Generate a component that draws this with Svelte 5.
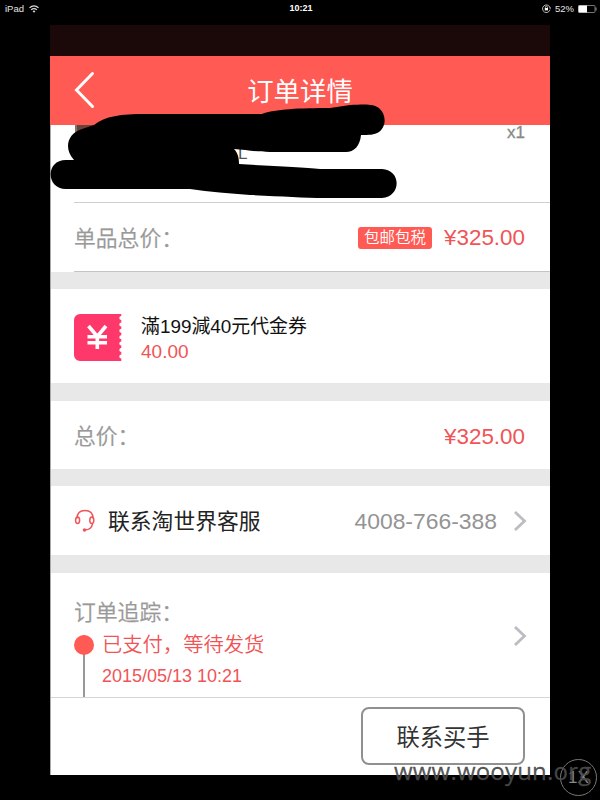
<script>
  const title = '订单详情';
</script>

{#snippet chevron()}
  <svg class="chevron" width="14" height="20" viewBox="0 0 14 20"><path d="M2 1 11.5 10 2 19" fill="none" stroke="#bcbcc2" stroke-width="2.8" /></svg>
{/snippet}

<div class="screen">
  <div class="tablet-bar">
    <div class="carrier">
      <span>iPad</span>
      <svg width="10" height="8" viewBox="0 0 10 8" fill="none" stroke="#ddd" stroke-width="1.2"><path d="M.5 2.8Q5-.9 9.5 2.8M2.2 4.7Q5 2.4 7.8 4.7" /><path d="M5 7.7 3.6 6.2Q5 5 6.4 6.2Z" fill="#ddd" stroke="none" /></svg>
    </div>
    <b class="clock">10:21</b>
    <div class="power">
      <svg width="9" height="9" viewBox="0 0 9 9" fill="none" stroke="#ccc" stroke-width=".9"><path d="M7.8 3.2A3.8 3.8 0 1 0 8 5.7" /><path d="M6.8 3.5 8.9 3.3 8.4 5.2Z" fill="#ccc" stroke="none" /><path d="M3.4 4.2V3.2a1 1 0 0 1 2 0v1" /><path d="M2.8 4H6v2.4H2.8Z" fill="#fff" stroke="none" /></svg>
      <span>52%</span>
      <svg width="19" height="8" viewBox="0 0 19 8"><rect x=".5" y=".5" width="16.5" height="7" rx="1" fill="none" stroke="#777" /><path d="M.5.5h8.5v7H.5Z" fill="#fff" /><path d="M18 2.5v3" stroke="#999" /></svg>
    </div>
  </div>

  <main class="phone">
    <div class="phone-bar"></div>
    <header>
      <svg class="back" width="24" height="38" viewBox="0 0 24 38"><path d="M19.5 2.5 3.5 19 19.5 35.5" fill="none" stroke="#fff" stroke-width="3" stroke-linecap="round" /></svg>
      <h1>{title}</h1>
    </header>

    <section class="item">
      <div class="thumb"></div>
      <span class="size">L</span>
      <span class="count">x1</span>
    </section>
    <section class="row subtotal">
      <span class="label">单品总价：</span>
      <span class="badge">包邮包税</span>
      <span class="price">¥325.00</span>
    </section>
    <section class="coupon">
      <svg class="ticket" width="48" height="47" viewBox="0 0 48 47">
        <path d="M6 0H47.3V2a2 2 0 0 0 0 4v2.4a2 2 0 0 0 0 4v2.4a2 2 0 0 0 0 4v2.4a2 2 0 0 0 0 4v2.4a2 2 0 0 0 0 4v2.4a2 2 0 0 0 0 4v2.4a2 2 0 0 0 0 4V47H6a6 6 0 0 1-6-6V6a6 6 0 0 1 6-6Z" fill="#fe386a" />
        <path d="M14.5 12 23.3 22.5 32 12M23.3 22V35M13.5 22.8H33M13.5 28.8H33" fill="none" stroke="#fff" stroke-width="3.6" />
      </svg>
      <div class="coupon-text">
        <span class="coupon-name">滿199減40元代金券</span>
        <span class="coupon-value">40.00</span>
      </div>
    </section>
    <section class="row total">
      <span class="label">总价：</span>
      <span class="price">¥325.00</span>
    </section>
    <section class="row service">
      <svg class="headset" width="22" height="24" viewBox="0 0 22 24" fill="none" stroke="#f05457" stroke-width="1.5"><path d="M3 9.5C3 4.5 6 1.5 11 1.5S19 4.5 19 9.5M18.6 14.5C18 18.6 15.4 20.8 10.8 21" /><ellipse cx="3.6" cy="11.3" rx="2" ry="3.3" /><ellipse cx="17.8" cy="11.3" rx="2" ry="3.3" /><circle cx="10.5" cy="21" r="1.8" fill="#f05457" stroke="none" /></svg>
      <span class="service-name">联系淘世界客服</span>
      <span class="phone-number">4008-766-388</span>
      {@render chevron()}
    </section>
    <section class="tracking">
      <div class="track-body">
        <span class="label">订单追踪：</span>
        <div class="event">
          <div class="rail"><i></i></div>
          <div class="event-text">
            <span class="state">已支付，等待发货</span>
            <span class="date">2015/05/13 10:21</span>
          </div>
        </div>
      </div>
      {@render chevron()}
    </section>
    <footer><button>联系买手</button></footer>
  </main>

  <svg class="marker" width="350" height="100" viewBox="50 100 350 100">
    <path d="M94 125C105 116 121 114 145 114H262C275 109 300 108 330 108L350 105C366 104 374 104 379 108C387 115 386 127 379 132C374 135 369 135 361 135C360 146 354 152 346 152H270C257 152 247 150 234 149C238 153 239 158 239 164C270 166 305 167 320 169H382C402 170 401 197 382 198H325C303 198 280 196 250 195C229 193 210 192 190 189H66C46 189 45 160 66 160H74C63 148 68 133 82 129Z" fill="#000" />
  </svg>
  <div class="zoom-button">1X</div>
  <span class="watermark">www.wooyun.org</span>
</div>

<style>
  :global(body) { background: #000; }
  * { box-sizing: border-box; }
  .screen { position: relative; width: 600px; height: 800px; overflow: hidden; background: #000; font-family: "Liberation Sans", "Noto Sans CJK SC", sans-serif; white-space: nowrap; }
  svg { display: block; flex: none; }
  .tablet-bar { height: 25px; padding: 3px 3px 0 5px; display: grid; grid-template-columns: 1fr auto 1fr; align-items: start; color: #e5e5e5; font-size: 9.5px; line-height: 11px; }
  .carrier, .power { display: flex; gap: 5px; align-items: center; }
  .power { justify-content: flex-end; gap: 4px; }
  .clock { color: #fff; font-size: 9px; }
  .phone { width: 500px; height: 750px; margin: 0 auto; background: #e8e8e8; border-left: 1px solid #aaa; }
  .phone-bar { height: 31px; background: #1a0908; margin-left: -1px; }
  header { height: 69px; margin-left: -1px; background: #ff5a54; display: grid; grid-template-columns: 75px 1fr 75px; align-items: center; }
  .back { margin-left: 23px; margin-top: -2px; }
  h1 { margin: 2px 0 0; color: #fff; text-align: center; font-size: 26.4px; line-height: 38px; font-weight: 400; }
  section, footer { background: #fff; }
  .item { height: 78px; padding: 0 25px 0 24px; display: flex; position: relative; }
  .item::after, .subtotal::after { content: ""; position: absolute; left: 23px; right: 0; bottom: 0; height: 1px; background: #cfcfcf; }
  .thumb { width: 24px; height: 13px; background: #6b4238; border-left: 2px solid #777; }
  .size { margin: 20px auto 0 139px; color: #555; font-size: 17px; line-height: 18px; }
  .count { color: #888; font-size: 17px; line-height: 15px; -webkit-text-stroke: .3px #888; }
  .row { display: flex; align-items: center; padding: 0 25px 0 23px; }
  .subtotal { height: 69px; margin-bottom: 17px; position: relative; }
  .subtotal::after { background: #c4c4c4; }
  .label { color: #999; font-family: "Noto Sans CJK SC", sans-serif; font-weight: 350; font-size: 21.8px; line-height: 30px; margin-top: -2px; -webkit-text-stroke: .25px #999; }
  .badge { margin: 0 12px 0 auto; width: 74px; height: 22px; border-radius: 3px; background: #ff5a54; color: #fff; font-size: 15.5px; line-height: 22px; text-align: center; font-weight: 350; }
  .price { color: #f05457; font-size: 22.4px; line-height: 28px; margin-top: 1px; }
  .coupon { height: 94px; margin-bottom: 18px; padding: 2px 23px 0; display: flex; align-items: center; gap: 19px; }
  .coupon-text { display: flex; flex-direction: column; margin-top: 4px; }
  .coupon-name { font-size: 18.9px; line-height: 26px; color: #111; }
  .coupon-value { font-size: 19px; line-height: 24px; color: #f05457; }
  .total { height: 68px; margin-bottom: 17px; padding-top: 2px; }
  .total .price { margin-left: auto; }
  .service { height: 69px; margin-bottom: 18px; padding-right: 23px; }
  .service-name { margin-left: 12px; margin-top: 2px; color: #222; font-size: 21.8px; line-height: 30px; }
  .phone-number { margin: 1px 16px 0 auto; color: #949494; font-size: 22.9px; line-height: 28px; }
  .tracking { height: 124px; display: flex; padding: 24px 23px 0; justify-content: space-between; }
  .track-body { display: flex; flex-direction: column; }
  .tracking .label { margin: -1px 0 1px; }
  .tracking .chevron { margin-top: 29px; }
  .event { height: 70px; display: flex; gap: 8px; }
  .rail { width: 20px; margin-top: 8px; background: linear-gradient(#999, #999) 9px 0 / 2px 100% no-repeat; }
  .rail i { display: block; width: 20px; height: 20px; border-radius: 50%; background: #ff5a54; }
  .event-text { display: flex; flex-direction: column; color: #f05457; }
  .state { font-size: 20.3px; line-height: 32px; margin-top: 2px; font-weight: 350; }
  .date { font-size: 18px; line-height: 24px; margin-top: 3px; }
  footer { height: 78px; border-top: 1px solid #d5d5d5; padding: 9px 25px 0; display: flex; justify-content: flex-end; }
  button { width: 164px; height: 58px; padding: 0; border: 2px solid #909090; border-radius: 8px; background: #fff; color: #333; font: 400 23.3px/52px "Noto Sans CJK SC", sans-serif; }
  .marker { position: absolute; left: 50px; top: 100px; }
  .zoom-button { position: absolute; left: 560px; top: 759px; width: 37px; height: 37px; border: 1px solid #777; border-radius: 50%; color: #888; text-align: center; font-size: 17px; line-height: 36px; }
  .watermark { position: absolute; left: 394px; top: 755px; font-family: "Open Sans", sans-serif; font-size: 24px; line-height: 32px; letter-spacing: .2px; color: rgba(75, 75, 75, .95); -webkit-text-stroke: .3px rgba(75, 75, 75, .9); }
</style>
